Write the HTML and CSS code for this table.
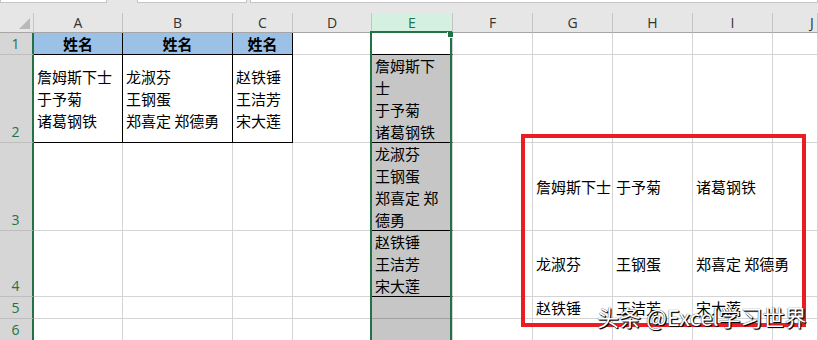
FILE: index.html
```html
<!DOCTYPE html>
<html lang="zh">
<head>
<meta charset="utf-8">
<link rel="stylesheet" href="styles.css">
</head>
<body>
<div class="page">
  <div class="topbar">
    <div class="box box-name"></div>
    <div class="box box-mid"></div>
    <div class="box box-formula"></div>
  </div>
  <div class="sheet">
    <!-- column headers -->
    <div class="corner"><svg width="34" height="20" viewBox="0 0 34 20"><polygon points="30,5 30,16 19,16" fill="#b9b9b9"/></svg></div>
    <div class="ch">A</div><div class="ch">B</div><div class="ch">C</div><div class="ch">D</div>
    <div class="ch ch-sel">E</div><div class="ch">F</div><div class="ch">G</div><div class="ch">H</div><div class="ch">I</div><div class="ch ch-j">J</div>

    <!-- row 1 -->
    <div class="rh">1</div>
    <div class="c hdr tb mid">姓名</div><div class="c hdr tb mid">姓名</div><div class="c hdr tb mid">姓名</div>
    <div class="c"></div>
    <div class="c e-first blk"></div>
    <div class="c"></div><div class="c"></div><div class="c"></div><div class="c"></div><div class="c"></div>

    <!-- row 2 -->
    <div class="rh">2</div>
    <div class="c tb mid left"><span>詹姆斯下士<br>于予菊<br>诸葛钢铁</span></div>
    <div class="c tb mid left"><span>龙淑芬<br>王钢蛋<br>郑喜定 郑德勇</span></div>
    <div class="c tb mid left"><span>赵铁锤<br>王洁芳<br>宋大莲</span></div>
    <div class="c"></div>
    <div class="c esel blk"><span>詹姆斯下<br>士<br>于予菊<br>诸葛钢铁</span></div>
    <div class="c"></div><div class="c"></div><div class="c"></div><div class="c"></div><div class="c"></div>

    <!-- row 3 -->
    <div class="rh">3</div>
    <div class="c"></div><div class="c"></div><div class="c"></div><div class="c"></div>
    <div class="c esel blk"><span>龙淑芬<br>王钢蛋<br>郑喜定 郑<br>德勇</span></div>
    <div class="c"></div>
    <div class="c mid left">詹姆斯下士</div>
    <div class="c mid left">于予菊</div>
    <div class="c mid left">诸葛钢铁</div>
    <div class="c"></div>

    <!-- row 4 -->
    <div class="rh">4</div>
    <div class="c"></div><div class="c"></div><div class="c"></div><div class="c"></div>
    <div class="c esel blk"><span>赵铁锤<br>王洁芳<br>宋大莲</span></div>
    <div class="c"></div>
    <div class="c mid left">龙淑芬</div>
    <div class="c mid left">王钢蛋</div>
    <div class="c mid left over">郑喜定 郑德勇</div>
    <div class="c"></div>

    <!-- row 5 -->
    <div class="rh">5</div>
    <div class="c"></div><div class="c"></div><div class="c"></div><div class="c"></div>
    <div class="c esel dk"></div>
    <div class="c"></div>
    <div class="c mid left">赵铁锤</div>
    <div class="c mid left">王洁芳</div>
    <div class="c mid left">宋大莲</div>
    <div class="c"></div>

    <!-- row 6 -->
    <div class="rh">6</div>
    <div class="c"></div><div class="c"></div><div class="c"></div><div class="c"></div>
    <div class="c esel"></div>
    <div class="c"></div><div class="c"></div><div class="c"></div><div class="c"></div><div class="c"></div>
  </div>

  <div class="selection"><div class="handle"></div></div>
  <div class="redbox"></div>
  <div class="watermark">头条 @Excel学习世界</div>
</div>
</body>
</html>
```

FILE: styles.css
```css
* { box-sizing: border-box; }
html, body { margin: 0; padding: 0; }
body {
  width: 818px;
  height: 340px;
  overflow: hidden;
  background: #ffffff;
  font-family: "Noto Sans CJK SC", "Noto Sans", sans-serif;
}
.page {
  position: relative;
  width: 818px;
  height: 340px;
  overflow: hidden;
}
.topbar {
  height: 13px;
  background: #e6e6e6;
  display: flex;
  align-items: flex-start;
}
.box {
  height: 3px;
  background: #ffffff;
  border: 1px solid #c6c6c6;
  border-top: none;
}
.box-name { width: 107px; }
.box-mid { width: 110px; margin-left: 30px; }
.box-formula { flex: 1; margin-left: 3px; }

.sheet {
  display: grid;
  grid-template-columns: 34px 89px 110px 60px 79px 81px 80px 80px 80px 80px 1fr;
  grid-template-rows: 20px 22px 88px 88px 66px 22px 22px;
}
.corner {
  background: #e6e6e6;
  border-bottom: 1px solid #a6a6a6;
  border-right: 1px solid #c6c6c6;
}
.corner svg { display: block; }
.ch {
  background: #e6e6e6;
  border-right: 1px solid #c3c3c3;
  border-bottom: 1px solid #a6a6a6;
  font-family: "Open Sans", "Noto Sans", sans-serif;
  font-size: 14px;
  color: #333333;
  display: flex;
  align-items: center;
  justify-content: center;
  line-height: 19px;
}
.ch-j { justify-content: flex-start; padding-left: 37px; }
.ch-sel {
  background: #d3f0e0;
  color: #217346;
}
.rh {
  background: #d6d6d6;
  border-bottom: 1px solid #bdbdbd;
  border-right: 2px solid #217346;
  font-family: "Open Sans", "Noto Sans", sans-serif;
  font-size: 14px;
  color: #217346;
  display: flex;
  align-items: flex-end;
  justify-content: center;
  line-height: 20px;
  padding-right: 1px;
}
.c {
  border-right: 1px solid #d4d4d4;
  border-bottom: 1px solid #d4d4d4;
  font-size: 15px;
  line-height: 22px;
  color: #000000;
  white-space: nowrap;
  display: flex;
  padding-left: 3px;
  overflow: visible;
}
.mid { align-items: center; }
.hdr {
  background: #9bc2e6;
  font-weight: bold;
  justify-content: center;
  padding-left: 0;
}
.tb {
  border-right-color: #000000;
  border-bottom-color: #000000;
}
.e-first { background: #ffffff; }
.esel {
  background: #c6c6c6;
  align-items: flex-start;
}
.blk { border-bottom-color: #000000; }
.dk { border-bottom-color: #a0a0a0; }
.over { position: relative; z-index: 1; }

.selection {
  position: absolute;
  left: 370px;
  top: 31px;
  width: 82px;
  height: 320px;
  border: 2px solid #217346;
}
.handle {
  position: absolute;
  right: -3px;
  top: -1px;
  width: 6px;
  height: 6px;
  background: #217346;
  border-left: 1px solid #ffffff;
  border-bottom: 1px solid #ffffff;
}
.redbox {
  position: absolute;
  left: 521px;
  top: 134px;
  width: 285px;
  height: 193px;
  border: 4px solid #ea1c24;
}
.watermark {
  position: absolute;
  left: 597px;
  top: 302px;
  font-size: 22px;
  line-height: 28px;
  color: #ffffff;
  white-space: nowrap;
  font-family: "Noto Sans CJK SC", "Noto Sans", sans-serif;
  text-shadow: 1px 1px 1px #000000, 0 0 1px #000000, 1px 1px 0 #333333;
}
```
